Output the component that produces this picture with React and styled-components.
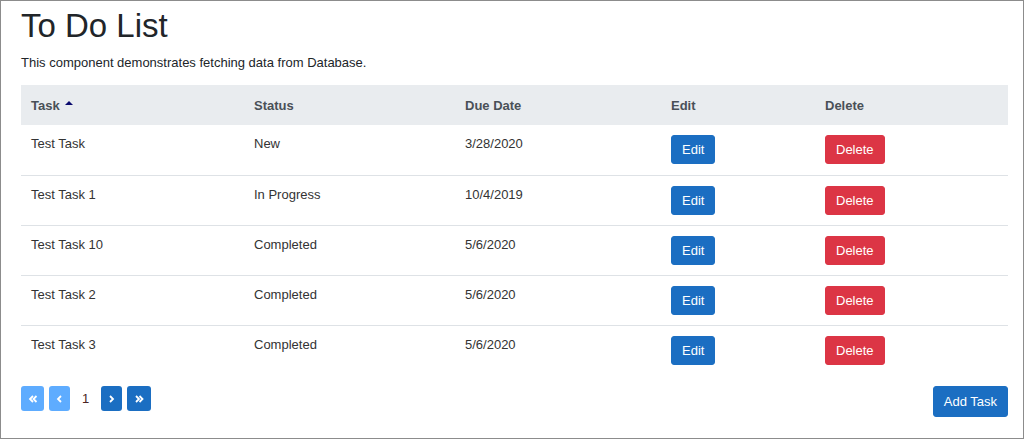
import { createGlobalStyle, styled } from "styled-components";

const GlobalStyle = createGlobalStyle`
  html, body {
    margin: 0;
    padding: 0;
    background: #ffffff;
  }
  body {
    font-family: "Liberation Sans", Arial, sans-serif;
    color: #212529;
  }
`;

const Frame = styled.div`
  box-sizing: border-box;
  width: 1024px;
  height: 439px;
  border: 1px solid #8c8c8c;
  padding: 5px 15px 0 20px;
`;

const Title = styled.h1`
  margin: 0;
  font-size: 33px;
  font-weight: 400;
  line-height: 40px;
  color: #212529;
`;

const Lead = styled.p`
  margin: 7px 0 12px;
  font-size: 13px;
  line-height: 20px;
`;

const Table = styled.table`
  width: 987px;
  border-collapse: collapse;
  table-layout: fixed;
  font-size: 13px;
`;

const HeadCell = styled.th`
  box-sizing: border-box;
  width: ${(p) => p.$w}px;
  height: 40px;
  padding: 0 10px;
  text-align: left;
  font-weight: 700;
  color: #495057;
  background: #e9ecef;
  vertical-align: middle;
`;

const SortArrow = styled.span`
  display: inline-block;
  margin-left: 5px;
  vertical-align: 5px;
  width: 0;
  height: 0;
  border-left: 4px solid transparent;
  border-right: 4px solid transparent;
  border-bottom: 4px solid #0a0a6e;
`;

const Row = styled.tr`
  height: 50px;
  & + & td {
    border-top: 1px solid #dee2e6;
  }
`;

const Cell = styled.td`
  padding: 9px 10px 0;
  vertical-align: top;
  line-height: 20px;
  color: #333333;
`;

const Button = styled.button`
  box-sizing: border-box;
  height: 29px;
  padding: 0 10px;
  margin-top: 1px;
  border: 1px solid ${(p) => (p.$danger ? "#dc3545" : "#1b6ec2")};
  border-radius: 3px;
  background: ${(p) => (p.$danger ? "#dc3545" : "#1b6ec2")};
  color: #ffffff;
  font-family: "Liberation Sans", Arial, sans-serif;
  font-size: 13px;
  cursor: pointer;
`;

const Footer = styled.div`
  display: flex;
  justify-content: space-between;
  align-items: flex-start;
  width: 987px;
  margin-top: 11px;
`;

const Pager = styled.div`
  display: flex;
  align-items: center;
  gap: 5px;
`;

const PageButton = styled.button`
  box-sizing: border-box;
  display: flex;
  align-items: center;
  justify-content: center;
  width: ${(p) => p.$w || 21}px;
  height: 25px;
  padding: 0;
  border: none;
  border-radius: 3px;
  background: ${(p) => (p.$disabled ? "#5eacff" : "#1b6ec2")};
  cursor: pointer;
`;

const PageNumber = styled.span`
  padding: 0 7px;
  font-size: 13px;
  color: #4a2323;
`;

const AddButton = styled(Button)`
  height: 31px;
  padding: 0 10px;
  margin-top: 0;
`;

const columns = [
  { label: "Task", w: 223, sort: true },
  { label: "Status", w: 211 },
  { label: "Due Date", w: 206 },
  { label: "Edit", w: 154 },
  { label: "Delete", w: 193 },
];

const tasks = [
  { name: "Test Task", status: "New", due: "3/28/2020" },
  { name: "Test Task 1", status: "In Progress", due: "10/4/2019" },
  { name: "Test Task 10", status: "Completed", due: "5/6/2020" },
  { name: "Test Task 2", status: "Completed", due: "5/6/2020" },
  { name: "Test Task 3", status: "Completed", due: "5/6/2020" },
];

function Chevron({ double, left }) {
  const one = left ? "M6 2 L3 5 L6 8" : "M3 2 L6 5 L3 8";
  const two = left ? "M9.5 2 L6.5 5 L9.5 8" : "M6.5 2 L9.5 5 L6.5 8";
  return (
    <svg width={double ? 12 : 9} height="10" viewBox={double ? "0 0 12 10" : "0 0 9 10"}>
      <path d={one} fill="none" stroke="#fff" strokeWidth="1.8" />
      {double && <path d={two} fill="none" stroke="#fff" strokeWidth="1.8" />}
    </svg>
  );
}

export default function App() {
  return (
    <>
      <GlobalStyle />
      <Frame>
        <Title>To Do List</Title>
        <Lead>This component demonstrates fetching data from Database.</Lead>
        <Table>
          <thead>
            <tr>
              {columns.map((c) => (
                <HeadCell key={c.label} $w={c.w}>
                  {c.label}
                  {c.sort && <SortArrow />}
                </HeadCell>
              ))}
            </tr>
          </thead>
          <tbody>
            {tasks.map((t) => (
              <Row key={t.name}>
                <Cell>{t.name}</Cell>
                <Cell>{t.status}</Cell>
                <Cell>{t.due}</Cell>
                <Cell>
                  <Button>Edit</Button>
                </Cell>
                <Cell>
                  <Button $danger>Delete</Button>
                </Cell>
              </Row>
            ))}
          </tbody>
        </Table>
        <Footer>
          <Pager>
            <PageButton $disabled $w={23}>
              <Chevron double left />
            </PageButton>
            <PageButton $disabled>
              <Chevron left />
            </PageButton>
            <PageNumber>1</PageNumber>
            <PageButton>
              <Chevron />
            </PageButton>
            <PageButton $w={24}>
              <Chevron double />
            </PageButton>
          </Pager>
          <AddButton>Add Task</AddButton>
        </Footer>
      </Frame>
    </>
  );
}
